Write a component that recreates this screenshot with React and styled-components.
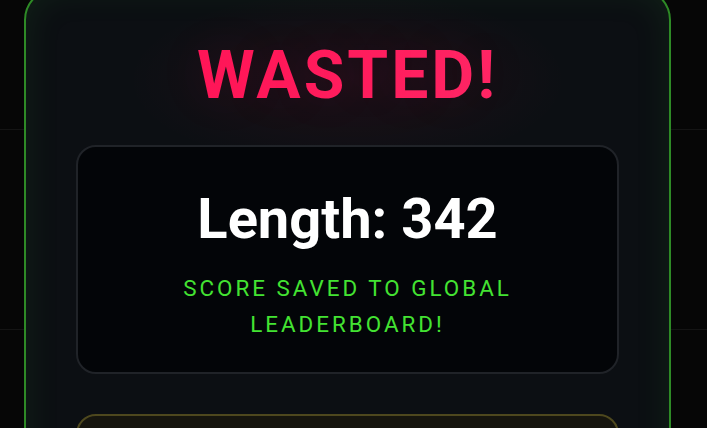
import React from "react";
import styled, { createGlobalStyle } from "styled-components";

const GlobalStyle = createGlobalStyle`
  * {
    box-sizing: border-box;
  }

  html,
  body {
    margin: 0;
    padding: 0;
    height: 100%;
    overflow: hidden;
  }

  body {
    font-family: Roboto, "Liberation Sans", sans-serif;
    background-color: #060606;
    background-image:
      linear-gradient(to bottom, #141414 1px, transparent 1px),
      linear-gradient(to right, #141414 1px, transparent 1px);
    background-size: 200px 200px;
    background-position: 147px 129px;
  }
`;

const Screen = styled.div`
  display: flex;
  justify-content: flex-start;
  padding-left: 24px;
`;

const GameOverCard = styled.section`
  width: 647px;
  margin-top: -12px;
  padding: 46px 50px 60px;
  border: 2px solid #2e8a26;
  border-radius: 32px;
  background:
    radial-gradient(ellipse 220px 90px at 50% 90px, rgba(255, 20, 90, 0.07), transparent),
    #0c0f13;
  box-shadow: inset 0 0 36px rgba(60, 200, 60, 0.1);
  display: flex;
  flex-direction: column;
  align-items: stretch;
`;

const Title = styled.h1`
  margin: 0 0 30px;
  text-align: center;
  font-size: 66px;
  line-height: 1.2;
  font-weight: 700;
  letter-spacing: 3px;
  background: linear-gradient(90deg, #ff0f52, #ff2e6c);
  -webkit-background-clip: text;
  background-clip: text;
  color: transparent;
  text-shadow: 0 0 50px rgba(255, 20, 90, 0.1);
`;

const ScorePanel = styled.div`
  border: 2px solid #202328;
  border-radius: 20px;
  background: #030508;
  padding: 39px 30px 29px;
  text-align: center;
`;

const LengthText = styled.p`
  margin: 0 0 18px;
  font-size: 56px;
  line-height: 1.2;
  font-weight: 700;
  color: #ffffff;
`;

const SavedNote = styled.p`
  margin: 0;
  font-size: 22.4px;
  line-height: 1.6;
  letter-spacing: 3px;
  color: #43e332;
  text-transform: uppercase;
`;

const RankPanel = styled.div`
  margin-top: 40px;
  height: 90px;
  border: 2px solid #4e481e;
  border-radius: 20px;
  background: #16150e;
`;

export default function App() {
  const length = 342;

  return (
    <>
      <GlobalStyle />
      <Screen>
        <GameOverCard>
          <Title>WASTED!</Title>
          <ScorePanel>
            <LengthText>Length: {length}</LengthText>
            <SavedNote>Score saved to global leaderboard!</SavedNote>
          </ScorePanel>
          <RankPanel />
        </GameOverCard>
      </Screen>
    </>
  );
}
